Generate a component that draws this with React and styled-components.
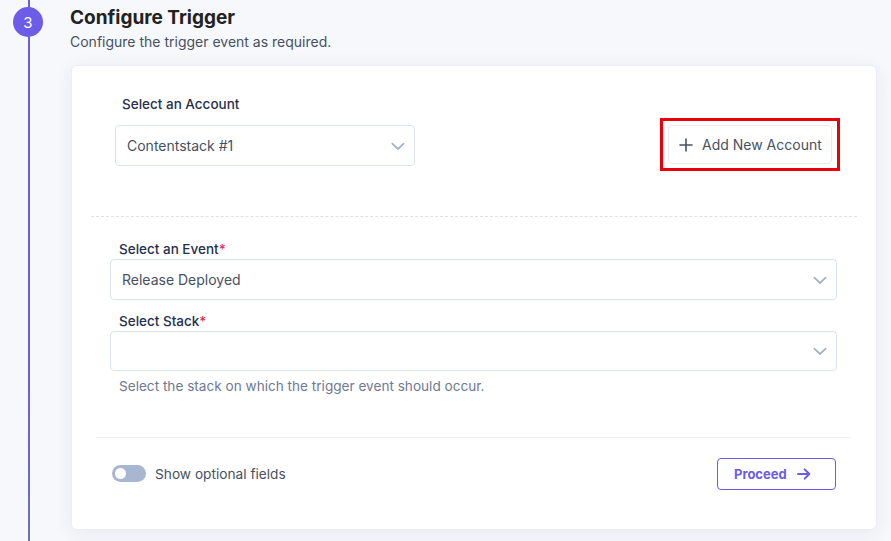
import React from 'react';
import styled, { createGlobalStyle } from 'styled-components';

const GlobalStyle = createGlobalStyle`
  body {
    margin: 0;
    background: #f7f8fc;
    font-family: Inter, "Noto Sans", sans-serif;
    -webkit-font-smoothing: antialiased;
  }
`;

const Page = styled.div`
  display: flex;
  width: 891px;
  height: 541px;
  overflow: hidden;
  background: #f7f8fc;
`;

const StepRail = styled.div`
  width: 56px;
  flex-shrink: 0;
  position: relative;
`;

const RailLine = styled.div`
  position: absolute;
  top: 0;
  bottom: 0;
  left: 28px;
  width: 2px;
  background: linear-gradient(#6c5ce7 0%, #6c5ce7 70%, #6a76a8 100%);
`;

const StepCircle = styled.div`
  position: relative;
  margin: 7px 0 0 13px;
  width: 30px;
  height: 30px;
  border-radius: 50%;
  background: #6c5ce7;
  color: #fff;
  font-size: 15px;
  display: flex;
  align-items: center;
  justify-content: center;
`;

const Content = styled.div`
  margin-left: 14px;
  padding-top: 7px;
`;

const Title = styled.h2`
  margin: 0;
  font-size: 19px;
  line-height: 22px;
  font-weight: 700;
  color: #222222;
`;

const Subtitle = styled.p`
  margin: 3px 0 0;
  font-size: 14px;
  line-height: 20px;
  color: #475161;
`;

const Card = styled.div`
  margin: 13px 0 0 1px;
  width: 806px;
  height: 465px;
  box-sizing: border-box;
  background: #fff;
  border: 1px solid #eceef3;
  border-radius: 6px;
  box-shadow: 0 4px 20px rgba(34, 43, 69, 0.07);
`;

const AccountRow = styled.div`
  display: flex;
  justify-content: space-between;
  align-items: flex-start;
  padding: 28px 36px 0 43px;
`;

const Field = styled.div`
  display: flex;
  flex-direction: column;
  width: ${p => p.width || '100%'};
  margin-top: ${p => p.top || 0}px;
`;

const Label = styled.label`
  font-size: 13.5px;
  line-height: 20px;
  font-weight: 500;
  color: #26304d;
  padding-left: ${p => p.indent || 9}px;
  margin-bottom: ${p => p.gap || 0}px;
`;

const Req = styled.span`
  color: #eb1e4b;
`;

const Select = styled.div`
  height: ${p => p.h || 41}px;
  box-sizing: border-box;
  border: 1px solid #dde3ee;
  border-radius: 4px;
  display: flex;
  align-items: center;
  justify-content: space-between;
  padding: 0 8px 0 11px;
  font-size: 14px;
  color: #475161;
`;

const HighlightBox = styled.div`
  margin-top: 24px;
  border: 3px solid #e8000b;
  padding: 4px 5px;
`;

const GhostButton = styled.button`
  display: flex;
  align-items: center;
  gap: 9px;
  height: 39px;
  width: 164px;
  box-sizing: border-box;
  padding: 0 0 0 10px;
  background: #fff;
  border: 1px solid #e6eaf1;
  border-radius: 4px;
  font-family: inherit;
  font-size: 14px;
  color: #475161;
`;

const Dashed = styled.div`
  margin: 45px 19px 0;
  border-top: 1px dashed #dde1e8;
`;

const EventSection = styled.div`
  padding: 22px 39px 0 38px;
`;

const Help = styled.p`
  margin: 5px 0 0;
  padding-left: 9px;
  font-size: 13.6px;
  line-height: 20px;
  color: #6e7a91;
`;

const Divider = styled.div`
  margin: 41px 25px 0 24px;
  border-top: 1px solid #eceef2;
`;

const Footer = styled.div`
  height: 71px;
  display: flex;
  align-items: center;
  justify-content: space-between;
  padding: 0 40px 0 40px;
`;

const ToggleWrap = styled.div`
  display: flex;
  align-items: center;
  gap: 9px;
  font-size: 13.7px;
  color: #475161;
`;

const Track = styled.span`
  width: 34px;
  height: 17px;
  border-radius: 9px;
  background: #a9b6cf;
  display: flex;
  align-items: center;
  padding-left: 3px;
  box-sizing: border-box;
`;

const Knob = styled.span`
  width: 11px;
  height: 11px;
  border-radius: 50%;
  background: #fff;
`;

const ProceedButton = styled.button`
  display: flex;
  align-items: center;
  gap: 9px;
  width: 119px;
  height: 32px;
  box-sizing: border-box;
  background: #fff;
  border: 1px solid #6c5ce7;
  border-radius: 4px;
  font-family: inherit;
  font-size: 13px;
  font-weight: 700;
  color: #6c5ce7;
  padding: 0 0 0 16px;
`;

const Chevron = () => (
  <svg width="16" height="16" viewBox="0 0 24 24" fill="none" stroke="#a5b0c7" strokeWidth="2.6" strokeLinecap="round" strokeLinejoin="round">
    <path d="M3.5 8.5l8.5 8 8.5-8" />
  </svg>
);

const Plus = () => (
  <svg width="14" height="14" viewBox="0 0 14 14" fill="none" stroke="#475161" strokeWidth="1.6" strokeLinecap="round">
    <path d="M7 1v12M1 7h12" />
  </svg>
);

const Arrow = () => (
  <svg width="16" height="16" viewBox="0 0 24 24" fill="none" stroke="#6c5ce7" strokeWidth="3" strokeLinecap="round" strokeLinejoin="round">
    <path d="M3 12h17M13 5l7 7-7 7" />
  </svg>
);

export default function App() {
  return (
    <>
      <GlobalStyle />
      <Page>
        <StepRail>
          <RailLine />
          <StepCircle>3</StepCircle>
        </StepRail>
        <Content>
          <Title>Configure Trigger</Title>
          <Subtitle>Configure the trigger event as required.</Subtitle>
          <Card>
            <AccountRow>
              <Field width="300px">
                <Label indent={7} gap={11}>Select an Account</Label>
                <Select>
                  Contentstack #1
                  <Chevron />
                </Select>
              </Field>
              <HighlightBox>
                <GhostButton>
                  <Plus />
                  Add New Account
                </GhostButton>
              </HighlightBox>
            </AccountRow>
            <Dashed />
            <EventSection>
              <Field>
                <Label>Select an Event<Req>*</Req></Label>
                <Select>
                  Release Deployed
                  <Chevron />
                </Select>
              </Field>
              <Field top={11}>
                <Label>Select Stack<Req>*</Req></Label>
                <Select h={40}>
                  <span />
                  <Chevron />
                </Select>
              </Field>
              <Help>Select the stack on which the trigger event should occur.</Help>
            </EventSection>
            <Divider />
            <Footer>
              <ToggleWrap>
                <Track><Knob /></Track>
                Show optional fields
              </ToggleWrap>
              <ProceedButton>
                Proceed
                <Arrow />
              </ProceedButton>
            </Footer>
          </Card>
        </Content>
      </Page>
    </>
  );
}
